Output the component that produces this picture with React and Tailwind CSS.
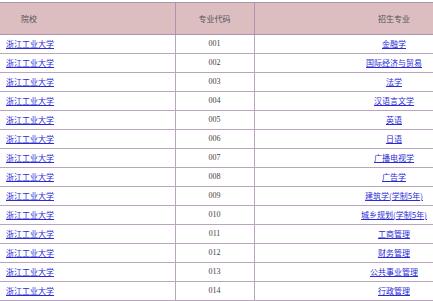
const rows = [
  ["001", "金融学"],
  ["002", "国际经济与贸易"],
  ["003", "法学"],
  ["004", "汉语言文学"],
  ["005", "英语"],
  ["006", "日语"],
  ["007", "广播电视学"],
  ["008", "广告学"],
  ["009", "建筑学(学制5年)"],
  ["010", "城乡规划(学制5年)"],
  ["011", "工商管理"],
  ["012", "财务管理"],
  ["013", "公共事业管理"],
  ["014", "行政管理"],
];

export default function App() {
  return (
    <div className="h-[301px] w-[433px] overflow-hidden bg-white pt-[2px] font-['Noto_Sans_CJK_SC',sans-serif] text-[8px] text-[#555]">
      <table className="w-[534px] table-fixed border-collapse">
        <colgroup>
          <col className="w-[175px]" />
          <col className="w-[79px]" />
          <col className="w-[280px]" />
        </colgroup>
        <thead>
          <tr className="h-[32px] bg-[#dcbec1]">
            <th className="border border-l-0 border-[#ad94ae] pl-[21px] text-left font-normal">
              院校
            </th>
            <th className="border border-[#ad94ae] text-center font-normal">
              专业代码
            </th>
            <th className="border border-[#ad94ae] text-center font-normal">
              招生专业
            </th>
          </tr>
        </thead>
        <tbody>
          {rows.map(([code, major]) => (
            <tr key={code} className="h-[19px]">
              <td className="border border-l-0 border-[#b9a6bc] pl-[6px] leading-none">
                <a href="#" className="text-[#2a2ad6] underline">
                  浙江工业大学
                </a>
              </td>
              <td className="border border-[#b9a6bc] text-center font-['Liberation_Serif',serif] leading-none text-[#444]">
                {code}
              </td>
              <td className="border border-[#b9a6bc] text-center leading-none">
                <a href="#" className="text-[#2a2ad6] underline">
                  {major}
                </a>
              </td>
            </tr>
          ))}
        </tbody>
      </table>
    </div>
  );
}
